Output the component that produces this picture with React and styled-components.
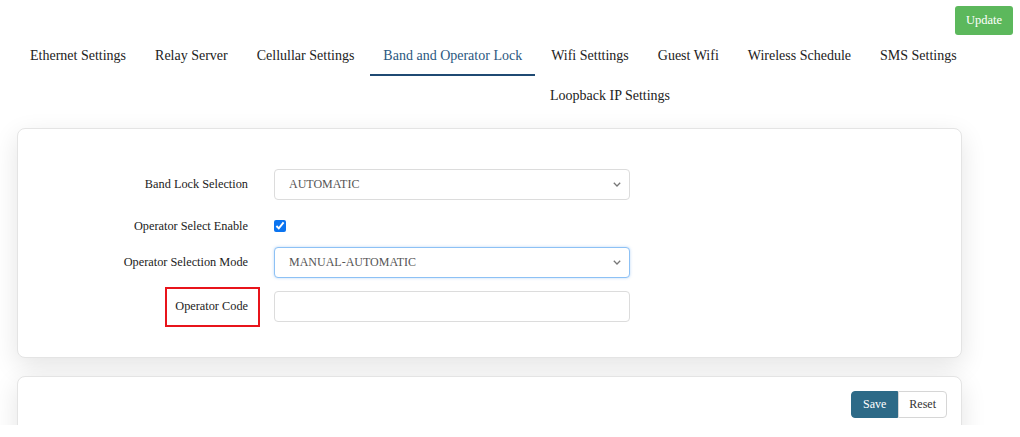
import React from 'react'
import styled, { createGlobalStyle } from 'styled-components'

const GlobalStyle = createGlobalStyle`
  body {
    margin: 0;
    background: #fff;
    font-family: "Liberation Serif", "Times New Roman", serif;
    color: #222;
  }
`

const chevron = `url("data:image/svg+xml,%3Csvg xmlns='http://www.w3.org/2000/svg' width='8' height='5' viewBox='0 0 8 5'%3E%3Cpath d='M0.8 0.8l3.2 3.2 3.2-3.2' fill='none' stroke='%23777' stroke-width='1.3'/%3E%3C/svg%3E")`

const Page = styled.div`
  height: 425px;
  overflow: hidden;
`

const TopBar = styled.div`
  display: flex;
  justify-content: flex-end;
  padding: 6px 7px 0 0;
  height: 28px;
`

const UpdateButton = styled.button`
  height: 29px;
  width: 58px;
  border: none;
  border-radius: 3px;
  background: #5cb85c;
  color: #fff;
  font-family: inherit;
  font-size: 12.5px;
  cursor: pointer;
`

const TabRow = styled.nav`
  display: flex;
  gap: 3px;
  padding-left: ${p => p.$indent || 17}px;
`

const Tab = styled.a`
  display: block;
  padding: ${p => (p.$first ? '12px 13px 8px' : '10px 13px')};
  line-height: 20px;
  font-size: 14px;
  color: ${p => (p.$active ? '#2b5780' : '#222')};
  border-bottom: 2px solid ${p => (p.$active ? '#1f4a73' : 'transparent')};
  white-space: nowrap;
  cursor: pointer;
`

const Card = styled.section`
  margin: ${p => p.$mt}px 58px 0 17px;
  background: #fff;
  border: 1px solid #e4e4e4;
  border-radius: 8px;
  box-shadow: 0 8px 26px rgba(0, 0, 0, 0.11);
  padding: ${p => p.$pad};
`

const FieldRow = styled.div`
  display: flex;
  align-items: center;
  margin-top: ${p => p.$mt}px;
  height: ${p => p.$h || 30}px;
`

const Label = styled.label`
  width: 230px;
  margin-right: 26px;
  text-align: right;
  font-size: 12.3px;
  color: #222;
  position: relative;
  ${p =>
    p.$marked &&
    `
    &::after {
      content: '';
      position: absolute;
      left: 147px;
      right: -12px;
      top: -12px;
      bottom: -13px;
      border: 2px solid #e8141b;
    }
  `}
`

const Select = styled.select`
  appearance: none;
  width: 356px;
  height: 31px;
  box-sizing: border-box;
  padding: 0 30px 0 14px;
  border: 1px solid ${p => (p.$focused ? '#8dc1f5' : '#dcdcdc')};
  box-shadow: ${p => (p.$focused ? '0 0 3px rgba(60, 140, 230, 0.35)' : 'none')};
  border-radius: 4px;
  background: #fff ${chevron} no-repeat right 8px center;
  font-family: inherit;
  font-size: 12px;
  color: #555;
  outline: none;
`

const TextInput = styled.input`
  width: 356px;
  height: 31px;
  box-sizing: border-box;
  border: 1px solid #dcdcdc;
  border-radius: 4px;
  padding: 0 14px;
  font-family: inherit;
  font-size: 12px;
  outline: none;
`

const Check = styled.input`
  margin: 0;
  width: 12px;
  height: 12px;
  accent-color: #0b74f0;
`

const ActionBar = styled.div`
  display: flex;
  justify-content: flex-end;
`

const GroupButton = styled.button`
  height: 27px;
  padding: 0 ${p => p.$px}px;
  font-family: inherit;
  font-size: 12px;
  border: 1px solid ${p => (p.$primary ? '#2d6a87' : '#d6d6d6')};
  background: ${p => (p.$primary ? '#2d6a87' : '#fff')};
  color: ${p => (p.$primary ? '#fff' : '#333')};
  border-radius: ${p => (p.$primary ? '4px 0 0 4px' : '0 4px 4px 0')};
  cursor: pointer;
`

const tabs = [
  'Ethernet Settings',
  'Relay Server',
  'Cellullar Settings',
  'Band and Operator Lock',
  'Wifi Setttings',
  'Guest Wifi',
  'Wireless Schedule',
  'SMS Settings',
]

export default function App() {
  return (
    <>
      <GlobalStyle />
      <Page>
        <TopBar>
          <UpdateButton>Update</UpdateButton>
        </TopBar>
        <TabRow>
          {tabs.map(t => (
            <Tab key={t} $first $active={t === 'Band and Operator Lock'}>
              {t}
            </Tab>
          ))}
        </TabRow>
        <TabRow $indent={537}>
          <Tab>Loopback IP Settings</Tab>
        </TabRow>

        <Card $mt={10} $pad="0 0 36px 0">
          <FieldRow $mt={40}>
            <Label>Band Lock Selection</Label>
            <Select defaultValue="AUTOMATIC">
              <option>AUTOMATIC</option>
            </Select>
          </FieldRow>
          <FieldRow $mt={17} $h={20}>
            <Label>Operator Select Enable</Label>
            <Check type="checkbox" defaultChecked />
          </FieldRow>
          <FieldRow $mt={11}>
            <Label>Operator Selection Mode</Label>
            <Select $focused defaultValue="MANUAL-AUTOMATIC">
              <option>MANUAL-AUTOMATIC</option>
            </Select>
          </FieldRow>
          <FieldRow $mt={14}>
            <Label $marked>Operator Code</Label>
            <TextInput type="text" />
          </FieldRow>
        </Card>

        <Card $mt={18} $pad="14px 14px 30px">
          <ActionBar>
            <GroupButton $primary $px={11}>Save</GroupButton>
            <GroupButton $px={10}>Reset</GroupButton>
          </ActionBar>
        </Card>
      </Page>
    </>
  )
}
